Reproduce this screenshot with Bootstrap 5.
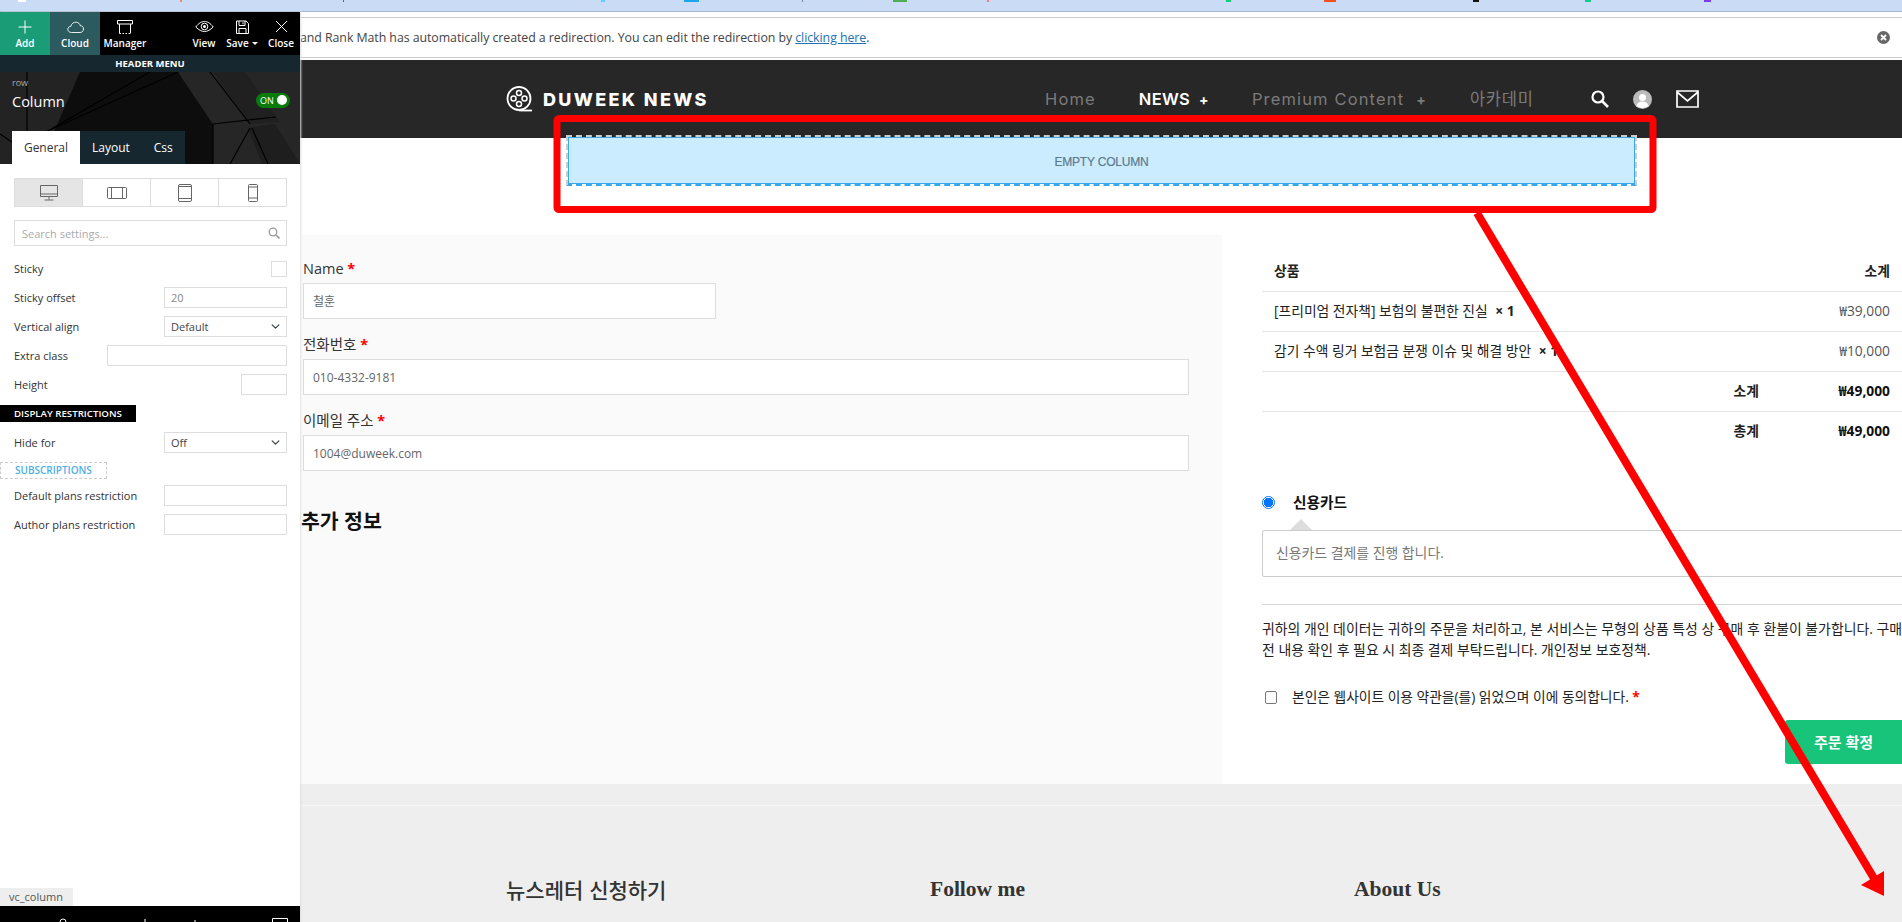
<!doctype html>
<html lang="ko">
<head>
<meta charset="utf-8">
<title>Checkout</title>
<link rel="stylesheet" href="https://cdn.jsdelivr.net/npm/bootstrap@5.3.0/dist/css/bootstrap.min.css">
<style>
html,body{height:922px;overflow:hidden}
body{font-family:"Open Sans","Noto Sans CJK KR",sans-serif;font-size:13px;color:#333;background:#fff;position:relative}
.tabstrip{height:12px;background:#c9dbf5;border-bottom:1px solid #a6b8d2;overflow:hidden}
.tabstrip svg{display:block}
.stage{height:910px}
.panel{width:300px;flex:none;background:#fff;box-shadow:1px 0 2px #ddd;z-index:2;height:910px}
.tool-top{height:43px;background:#000;color:#fff}
.tool-btn{width:50px;font-size:10px;font-weight:600;line-height:13px;color:#fff;padding-top:7px;white-space:nowrap}
.tool-btn svg{display:block;margin:0 auto 2px;height:16px}
.tool-add{background:#1a9c77}
.tool-cloud{background:#2b5a5f}
.tool-spacer{flex:1}
.tool-view{width:36px}
.tool-save{width:40px}
.tool-close{width:38px}
.caret-mini{display:inline-block;border:3px solid transparent;border-top-color:#fff;border-bottom:0;vertical-align:2px;margin-left:3px}
.menu-band{height:17px;background:#17272f;color:#fff;font-size:9.5px;font-weight:700;line-height:17px;text-align:center}
.pn-head{height:92px;position:relative;overflow:hidden;background:#232323;color:#fff}
.pn-art{position:absolute;inset:0}
.pn-title{position:relative;padding:4px 12px 0}
.pn-kind{font-size:9px;color:#aaa;line-height:14px}
.pn-name{font-size:14.5px;line-height:22px;margin-top:1px}
.pn-switch{position:absolute;top:21px;left:256px;width:34px;height:15px;border-radius:8px;background:#0a7a0a;color:#fff;font-size:9px;line-height:15px;padding-left:4px}
.pn-switch::after{content:"";position:absolute;right:3px;top:2px;width:10px;height:10px;border-radius:50%;background:#fff}
.pn-tabs{position:absolute;left:12px;bottom:0;height:33px;background:#17272f}
.pn-tab{font-size:12px;line-height:33px;color:#fff;padding:0 24px 0 0}
.pn-tab:last-child{padding-right:12px}
.pn-tab-on{background:#fff;color:#333;width:68px;text-align:center;padding:0;margin-right:12px}
.pn-body{padding:14px 13px 0 14px;font-size:11px;color:#333}
.dev-row{height:29px;border:1px solid #ddd}
.dev-cell{flex:1;border-left:1px solid #ddd}
.dev-cell:first-child{border-left:0;background:#e5e5e5}
.pn-search{position:relative;margin-top:13px;margin-bottom:8px}
.pn-search svg{position:absolute;right:7px;top:7px}
.pn-input.form-control,.pn-input.form-select{height:21px;min-height:0;border:1px solid #ddd;border-radius:0;font-size:11px;padding:0 6px;color:#444;box-shadow:none;line-height:19px}
.pn-input.form-select{background-position:right 5px center;background-size:11px 9px}
.pn-dim.form-control{color:#888}
.pn-search .form-control{height:26px;padding-left:7px}
.pn-search .form-control::placeholder{color:#aaa}
.pn-row{height:29px}
.pn-row>span:first-child{padding-top:2px}
.w-123{width:123px;flex:none}
.w-180{width:180px;flex:none}
.w-46{width:46px;flex:none}
.w-16{width:16px;height:16px;flex:none;border:1px solid #ddd}
.sec-black{width:136px;height:17px;background:#000;color:#fff;font-size:9.7px;font-weight:600;line-height:17px;padding-left:14px;margin:5.500px 0 6px -14px}
.sec-dash{width:107px;height:17px;border:1px dashed #ccc;color:#4eaee8;font-size:10px;font-weight:600;line-height:15px;padding-left:14px;margin:5.500px 0 1.500px -14px}
.pn-tag{width:73px;height:18px;background:#eee;color:#555;font-size:11px;line-height:18px;padding-left:9px}
.pn-foot{height:16px;background:#000;overflow:hidden}
.pn-foot svg{display:block}
.site{width:1602px;flex:none;overflow:hidden}
.notice{height:41px;margin-top:5px;border-top:1px solid #ccc;border-bottom:1px solid #ccc;font-size:12.350px;line-height:38px;color:#444;padding-right:12px;letter-spacing:-.05px}
.notice a{color:#2271b1}
.notice svg{flex:none}
.site-head{height:78px;margin-top:2px;background:#272727;color:#fff;padding-left:206px}
.brand-name{font-family:Inter,"Open Sans",sans-serif;font-weight:800;font-size:18px;letter-spacing:2.350px;margin-left:11px;width:166px;white-space:nowrap}
.top-nav{margin-left:336px;font-family:Inter,"Noto Sans CJK KR",sans-serif;font-size:16.500px;letter-spacing:1.150px;gap:43px;color:#777}
.top-nav a{color:#7b7b7b;text-decoration:none;white-space:nowrap}
.top-nav a.is-on{color:#fff;font-weight:600;letter-spacing:.3px}
.top-nav a.nav-ko{letter-spacing:.8px}
.plus{margin-left:9px;font-weight:700;font-size:14px}
.plus-far{margin-left:12px}
.head-icons{margin-left:57px;gap:24px}
.empty-wrap{margin:-3px 265px 49px 266px;border:2px dashed #ccc;border-bottom-color:#3aa7e8;height:51px;position:relative}
.empty-box{height:100%;background:#cbecff;border:1px solid #3aa7e8;color:#5d7a8c;font-family:"Liberation Sans",sans-serif;font-size:12px;text-align:center;line-height:48px;letter-spacing:-.2px;-webkit-text-stroke:.2px #5d7a8c}
.checkout{height:549px}
.co-left{width:920px;margin-left:2px;flex:none;background:#fafafa;padding:21px 0 0 1px}
.co-label{display:block;font-size:14.500px;line-height:26px;color:#333;margin:0 0 1px}
.req{color:#f00;font-weight:700}
.co-input.form-control{height:36px;border:1px solid #ddd;border-radius:0;background:#fff;font-size:12px;color:#666;padding:0 9px;margin-bottom:13px;width:886px;box-shadow:none}
.co-input.co-short{width:413px}
.co-extra{font-size:20.500px;font-weight:700;color:#111;margin:37px 0 0 -2px;line-height:26px}
.co-right{width:680px;flex:none;overflow:hidden;padding:16px 0 0 40px}
.co-table{width:640px;table-layout:fixed;margin:0;font-size:13.800px}
.co-table th,.co-table td{height:40px;padding:0 12px;border-color:#e5e5e5;vertical-align:middle;color:#222;white-space:nowrap;overflow:visible}
.co-table thead th{padding-top:2px}
.co-table tbody tr:last-child th,.co-table tbody tr:last-child td{border-bottom:0}
.co-table .num{color:#555;text-align:right}
.co-table th.num,.co-table td.bold-num{color:#111;font-weight:700;text-align:right}
.co-table .lab{font-weight:600;text-align:right;padding:0 0 0 0}
.c-a{width:458px}.c-b{width:39px}.c-c{width:143px}
.qty{font-weight:700;margin-left:4px}
.pay-row{margin-top:41px;height:20px;font-size:14.700px;font-weight:600;color:#111}
.pay-row .form-check-input{margin:0 18px 0 0;width:13px;height:13px;flex:none;border:1px solid #0075ff;background:radial-gradient(circle,#0075ff 0 4.500px,#fff 5px);box-shadow:none}
.pay-box{position:relative;margin-top:18px;width:660px;height:47px;border:1px solid #ccc;border-radius:2px;font-size:13.900px;color:#777;line-height:44px;padding-left:13px}
.pay-box::before{content:"";position:absolute;left:27px;top:-12px;border:11px solid transparent;border-top:0;border-bottom:11px solid #ddd}
.terms{border-top:1px solid #d5d5d5;margin-top:27px;padding-top:13px;font-size:13.900px;line-height:21px;color:#222;white-space:nowrap}
.terms-check{margin-top:27px;margin-left:3px;font-size:13.750px;color:#222;height:20px}
.terms-check .form-check-input{margin:0 15px 0 0;width:12px;height:13px;flex:none;border-radius:2px;border-color:#777}
.order-wrap{margin-top:13px}
.order-btn.btn{height:44px;background:#18c37a;border:0;border-radius:3px 0 0 3px;color:#fff;font-size:15px;font-weight:700;margin-left:523px;display:block;width:117px;padding:0}
.site-foot{background:#eee;height:138px}
.foot-line{height:1px;background:#f6f6f6;position:relative;top:21px}
.foot-cols{padding:90px 0 0 206px}
.foot-col{width:424px;flex:none;font-family:"Liberation Serif","Noto Sans CJK KR",serif;font-size:21.500px;font-weight:700;color:#333;line-height:28px;margin:0}
.foot-col.ko{font-family:"Noto Sans CJK KR",sans-serif;font-size:21px;font-weight:500}
.mark-layer{position:absolute;left:0;top:0;z-index:5;pointer-events:none}
</style>
</head>
<body>
<div class="tabstrip">
<svg width="1902" height="2"><rect x="18" width="8" height="2" fill="#fff"/><rect x="180" width="2" height="2" fill="#e98a6a"/><rect x="343" width="1" height="2" fill="#567"/><rect x="601" width="4" height="2" fill="#6cf"/><rect x="684" width="15" height="2" fill="#1aa7e8"/><rect x="802" width="1" height="2" fill="#789"/><rect x="893" width="14" height="2" fill="#4caf50"/><rect x="987" width="2" height="2" fill="#f77"/><rect x="1226" width="5" height="2" fill="#1c7"/><rect x="1324" width="12" height="2" fill="#f4511e"/><rect x="1473" width="6" height="2" fill="#111"/><rect x="1585" width="6" height="2" fill="#1c8"/><rect x="1704" width="7" height="2" fill="#7c3aed"/></svg>
</div>
<div class="stage d-flex">
<aside class="panel d-flex flex-column">
  <div class="tool-top d-flex">
    <div class="tool-btn tool-add text-center"><svg width="14" height="16" viewBox="0 0 14 16"><path d="M7 1.500v13M.5 8h13" stroke="#fff" stroke-width="1" fill="none"/></svg>Add</div>
    <div class="tool-btn tool-cloud text-center"><svg width="17" height="16" viewBox="0 0 17 16"><path d="M4.500 13.500C2 13.500.8 11.800.8 10.300.8 8.500 2.300 7.300 3.800 7.400 4.400 4.500 6.800 3 9.200 3.200c2.300.2 3.800 1.800 4 3.500 2-.1 3.300 1.400 3.300 3.300 0 2-1.500 3.500-3.500 3.500z" stroke="#fff" stroke-width=".9" fill="none"/></svg>Cloud</div>
    <div class="tool-btn text-center"><svg width="16" height="16" viewBox="0 0 16 16"><path d="M.5 1.500h15v3.500H.5zM2.500 5v9.500M13.500 5v9.500" stroke="#fff" fill="none"/><path d="M2.500 14.500h11" stroke="#fff" stroke-dasharray="1.500 1.500" fill="none"/></svg>Manager</div>
    <div class="tool-spacer"></div>
    <div class="tool-btn tool-view text-center"><svg width="19" height="16" viewBox="0 0 19 16"><path d="M.8 8c3-4 5.700-5.500 8.700-5.500S15.200 4 18.200 8c-3 3-5.700 4.500-8.700 4.500S3.800 11 .8 8z" stroke="#fff" fill="none"/><circle cx="9.500" cy="7.500" r="3.300" stroke="#fff" fill="none"/><circle cx="9.500" cy="7.500" r="1.500" fill="#fff"/></svg>View</div>
    <div class="tool-btn tool-save text-center"><svg width="13" height="16" viewBox="0 0 13 16"><path d="M.5 2h9.500l2.500 2.500v10H.5zM3 2v4.500h6V2M3 14.500V9.500h7v5M7 3.300v2" stroke="#fff" fill="none"/></svg>Save<span class="caret-mini"></span></div>
    <div class="tool-btn tool-close text-center"><svg width="13" height="16" viewBox="0 0 13 16"><path d="M1 2 12 13M12 2 1 13" stroke="#fff" fill="none"/></svg>Close</div>
  </div>
  <div class="menu-band">HEADER MENU</div>
  <div class="pn-head">
    <svg class="pn-art" width="300" height="92" viewBox="0 0 300 92">
      <polygon points="80,0 178,0 213,52 213,92 185,92 40,92" fill="#0d0d0d"/>
      <polygon points="178,0 300,0 300,92 213,92 213,52" fill="#262626"/>
      <polygon points="213,0 245,0 280,50 250,52" fill="#202020"/>
      <polygon points="248,56 275,52 300,92 262,92" fill="#1e1e1e"/>
      <path d="M178 0 50 58M150 0 20 75M0 62 45 92M27 0 27 92M213 52 276 45M213 52 213 92M250 56 230 92M252 56 268 92M210 0 250 52" stroke="#000" stroke-width="1.200" fill="none"/>
    </svg>
    <div class="pn-title"><div class="pn-kind">row</div><div class="pn-name">Column</div></div>
    <div class="pn-switch">ON</div>
    <div class="pn-tabs d-flex"><div class="pn-tab pn-tab-on">General</div><div class="pn-tab">Layout</div><div class="pn-tab">Css</div></div>
  </div>
  <div class="pn-body">
    <div class="dev-row d-flex">
      <div class="dev-cell d-flex align-items-center justify-content-center"><svg width="18" height="18" viewBox="0 0 18 18"><path d="M.5 1.500h17v11H.500zM.5 10h17M9 12.500v3M4.500 16h9" stroke="#666" fill="none"/></svg></div>
      <div class="dev-cell d-flex align-items-center justify-content-center"><svg width="20" height="14" viewBox="0 0 20 14"><path d="M1.500 1.500h17a1 1 0 0 1 1 1v9a1 1 0 0 1-1 1h-17a1 1 0 0 1-1-1v-9a1 1 0 0 1 1-1zM4.500 1.500v11M15.500 1.500v11" stroke="#666" fill="none"/></svg></div>
      <div class="dev-cell d-flex align-items-center justify-content-center"><svg width="14" height="18" viewBox="0 0 14 18"><path d="M2 .5h10a1.500 1.500 0 0 1 1.500 1.500v14a1.500 1.500 0 0 1-1.500 1.500H2A1.500 1.500 0 0 1 .5 16V2A1.500 1.500 0 0 1 2 .5zM.5 2.500h13M.5 14.500h13" stroke="#666" fill="none"/></svg></div>
      <div class="dev-cell d-flex align-items-center justify-content-center"><svg width="10" height="18" viewBox="0 0 10 18"><path d="M1.500.5h7a1 1 0 0 1 1 1v15a1 1 0 0 1-1 1h-7a1 1 0 0 1-1-1v-15a1 1 0 0 1 1-1zM.5 3h9M.5 14h9" stroke="#666" fill="none"/></svg></div>
    </div>
    <div class="pn-search"><input class="form-control pn-input" placeholder="Search settings..."><svg width="12" height="12" viewBox="0 0 12 12"><circle cx="5" cy="5" r="3.800" stroke="#999" stroke-width="1.300" fill="none"/><path d="M8 8l3.500 3.500" stroke="#999" stroke-width="1.600"/></svg></div>
    <div class="pn-row d-flex align-items-center justify-content-between"><span>Sticky</span><span class="w-16"></span></div>
    <div class="pn-row d-flex align-items-center justify-content-between"><span>Sticky offset</span><input class="form-control pn-input pn-dim w-123" value="20"></div>
    <div class="pn-row d-flex align-items-center justify-content-between"><span>Vertical align</span><select class="form-select pn-input w-123"><option>Default</option></select></div>
    <div class="pn-row d-flex align-items-center justify-content-between"><span>Extra class</span><input class="form-control pn-input w-180"></div>
    <div class="pn-row d-flex align-items-center justify-content-between"><span>Height</span><input class="form-control pn-input w-46"></div>
    <div class="sec-black">DISPLAY RESTRICTIONS</div>
    <div class="pn-row d-flex align-items-center justify-content-between"><span>Hide for</span><select class="form-select pn-input w-123"><option>Off</option></select></div>
    <div class="sec-dash">SUBSCRIPTIONS</div>
    <div class="pn-row d-flex align-items-center justify-content-between"><span>Default plans restriction</span><input class="form-control pn-input w-123"></div>
    <div class="pn-row d-flex align-items-center justify-content-between"><span>Author plans restriction</span><input class="form-control pn-input w-123"></div>
  </div>
  <div class="pn-tag mt-auto">vc_column</div>
  <div class="pn-foot"><svg width="300" height="16"><path d="M60 16a3 3 0 0 1 6 0M145 16v-3M195 16v-2" stroke="#fff" fill="none"/><path d="M272.500 16v-3.500h15v3.500" stroke="#fff" fill="none"/></svg></div>
</aside>
<main class="site">
  <div class="notice d-flex justify-content-between align-items-center">
    <span class="text-nowrap ps-0">and Rank Math has automatically created a redirection. You can edit the redirection by <a href="#">clicking here</a>.</span>
    <svg width="13" height="13" viewBox="0 0 13 13"><circle cx="6.500" cy="6.500" r="6.500" fill="#666"/><path d="M4 4l5 5M9 4 4 9" stroke="#fff" stroke-width="1.800"/></svg>
  </div>
  <header class="site-head d-flex align-items-center">
    <svg width="26" height="26" viewBox="0 0 26 26"><circle cx="13" cy="12.500" r="11.500" stroke="#fff" stroke-width="1.800" fill="none"/><circle cx="13" cy="7" r="2.500" stroke="#fff" stroke-width="1.500" fill="none"/><circle cx="13" cy="18" r="2.500" stroke="#fff" stroke-width="1.500" fill="none"/><circle cx="7.500" cy="12.500" r="2.500" stroke="#fff" stroke-width="1.500" fill="none"/><circle cx="18.500" cy="12.500" r="2.500" stroke="#fff" stroke-width="1.500" fill="none"/><path d="M13 24.500h13" stroke="#fff" stroke-width="1.800"/></svg>
    <div class="brand-name">DUWEEK NEWS</div>
    <nav class="top-nav d-flex align-items-center">
      <a href="#">Home</a>
      <a href="#" class="is-on">NEWS<span class="plus">+</span></a>
      <a href="#">Premium Content<span class="plus plus-far">+</span></a>
      <a href="#" class="nav-ko">아카데미</a>
    </nav>
    <div class="head-icons d-flex align-items-center">
      <svg width="18" height="18" viewBox="0 0 18 18"><circle cx="7" cy="7" r="5.500" stroke="#fff" stroke-width="2.200" fill="none"/><path d="M11 11l6 6" stroke="#fff" stroke-width="2.600"/></svg>
      <svg width="19" height="19" viewBox="0 0 19 19"><circle cx="9.500" cy="9.500" r="9.500" fill="#bbb"/><circle cx="9.500" cy="7.500" r="3.500" fill="#fff"/><path d="M3.500 16c1-3.500 3-4.500 6-4.500s5 1 6 4.500a9.500 9.500 0 0 1-12 0z" fill="#fff"/></svg>
      <svg width="23" height="18" viewBox="0 0 23 18"><path d="M1 1h21v16H1zM1 2l10.500 9L22 2" stroke="#fff" stroke-width="1.700" fill="none"/></svg>
    </div>
  </header>
  <div class="empty-wrap"><div class="empty-box">EMPTY COLUMN</div></div>
  <section class="checkout d-flex">
    <div class="co-left">
      <label class="co-label">Name <span class="req">*</span></label>
      <input class="form-control co-input co-short" value="철훈">
      <label class="co-label">전화번호 <span class="req">*</span></label>
      <input class="form-control co-input" value="010-4332-9181">
      <label class="co-label">이메일 주소 <span class="req">*</span></label>
      <input class="form-control co-input" value="1004@duweek.com">
      <h3 class="co-extra">추가 정보</h3>
    </div>
    <div class="co-right">
      <table class="table co-table">
        <colgroup><col class="c-a"><col class="c-b"><col class="c-c"></colgroup>
        <thead><tr><th>상품</th><th></th><th class="text-end fw-bold">소계</th></tr></thead>
        <tbody>
          <tr><td>[프리미엄 전자책] 보험의 불편한 진실 <span class="qty">× 1</span></td><td></td><td class="num">₩39,000</td></tr>
          <tr><td>감기 수액 링거 보험금 분쟁 이슈 및 해결 방안 <span class="qty">× 1</span></td><td></td><td class="num">₩10,000</td></tr>
          <tr><td></td><td class="lab">소계</td><td class="bold-num">₩49,000</td></tr>
          <tr><td></td><td class="lab">총계</td><td class="bold-num">₩49,000</td></tr>
        </tbody>
      </table>
      <div class="pay-row d-flex align-items-center"><input class="form-check-input" type="radio" checked><span>신용카드</span></div>
      <div class="pay-box">신용카드 결제를 진행 합니다.</div>
      <div class="terms">귀하의 개인 데이터는 귀하의 주문을 처리하고, 본 서비스는 무형의 상품 특성 상 구매 후 환불이 불가합니다. 구매<br>전 내용 확인 후 필요 시 최종 결제 부탁드립니다. 개인정보 보호정책.</div>
      <div class="terms-check d-flex align-items-center"><input class="form-check-input" type="checkbox"><span>본인은 웹사이트 이용 약관을(를) 읽었으며 이에 동의합니다. <span class="req">*</span></span></div>
      <div class="order-wrap"><button class="btn order-btn" type="button">주문 확정</button></div>
    </div>
  </section>
  <footer class="site-foot">
    <div class="foot-line"></div>
    <div class="foot-cols d-flex">
      <h4 class="foot-col ko">뉴스레터 신청하기</h4>
      <h4 class="foot-col">Follow me</h4>
      <h4 class="foot-col">About Us</h4>
    </div>
  </footer>
</main>
</div>
<svg class="mark-layer" width="1902" height="922" viewBox="0 0 1902 922">
  <rect x="557" y="118.500" width="1096" height="91" rx="2" fill="none" stroke="#f00" stroke-width="7"/>
  <path d="M1477 213 1875 880" stroke="#f00" stroke-width="8" fill="none"/>
  <polygon points="1884,896 1861,885 1884,871" fill="#f00"/>
</svg>
<script src="https://cdn.jsdelivr.net/npm/bootstrap@5.3.0/dist/js/bootstrap.bundle.min.js"></script>
</body>
</html>
